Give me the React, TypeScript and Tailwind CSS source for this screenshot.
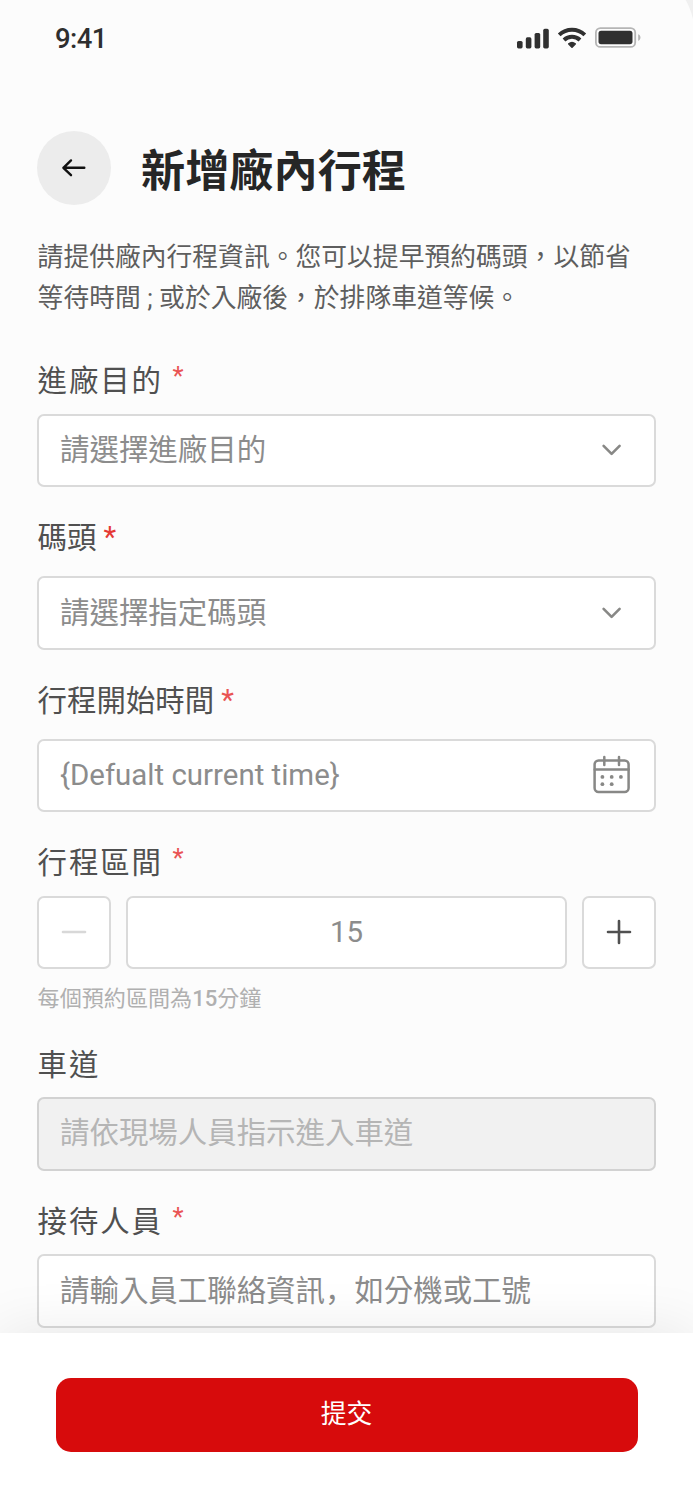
import type { ReactNode } from "react";

function Chevron() {
  return (
    <svg className="h-11 w-11 shrink-0" viewBox="0 0 44 44" fill="none" stroke="#888886" strokeWidth="2.6" strokeLinecap="round" strokeLinejoin="round">
      <path d="M13.6 17.9 21.6 25.9 29.6 17.9" />
    </svg>
  );
}

function CalendarIcon() {
  return (
    <svg className="h-11 w-11 shrink-0" viewBox="0 0 44 44" fill="none" stroke="#888886" strokeWidth="2.5" strokeLinecap="round">
      <rect x="4.6" y="7.5" width="34" height="31.5" rx="4" />
      <path d="M4.7 16.5h34M14.3 3.9v8M29 3.9v8" />
      <g fill="#888886" stroke="none">
        <circle cx="12.4" cy="23.9" r="1.9" />
        <circle cx="21.7" cy="23.9" r="1.9" />
        <circle cx="30.9" cy="23.9" r="1.9" />
        <circle cx="12.4" cy="31.2" r="1.9" />
        <circle cx="21.7" cy="31.2" r="1.9" />
      </g>
    </svg>
  );
}

function Label({ children, spaced, mark }: { children: ReactNode; spaced?: boolean; mark?: ReactNode }) {
  return (
    <div className="flex h-11 items-start pl-[0.6px] text-[29.44px] leading-[44px] text-[#505050]">
      <span className={spaced ? "tracking-[1.9px]" : ""}>{children}</span>
      {mark}
    </div>
  );
}

const smallMark = <span className="ml-[9.5px] text-[25.7px] leading-[32px] text-[#e95454]">*</span>;

function Box({ children, className = "" }: { children: ReactNode; className?: string }) {
  return (
    <div className={"flex h-[73.6px] items-center rounded-[7px] border-2 pb-px " + className}>
      {children}
    </div>
  );
}

const inputBox = "justify-between border-[#dadada] bg-white pl-[21px] pr-5 text-[29.44px] text-[#8c8c8c]";

function StatusBar() {
  return (
    <div className="flex h-[76px] items-center justify-between pl-[55px] pr-[52px]">
      <span className="pt-0.5 text-[27.5px] font-medium leading-8 tracking-[-0.6px] text-[#2e2e2e]">9:41</span>
      <svg className="h-8 w-[126px]" viewBox="0 0 126 32" fill="none">
        <g fill="#303030">
          <rect x="2" y="19" width="5.6" height="7.4" rx="1.6" />
          <rect x="10.8" y="15.3" width="5.6" height="11.1" rx="1.6" />
          <rect x="19.6" y="11" width="5.6" height="15.4" rx="1.6" />
          <rect x="28.2" y="6.8" width="5.6" height="19.6" rx="1.6" />
          <path d="M53.8 21.9a5 5 0 0 1 6.4 0l-3.2 3.3z" stroke="#303030" strokeWidth="1.6" strokeLinejoin="round" />
        </g>
        <path d="M44.2 12.9a18.5 18.5 0 0 1 25.6 0M49 18a11.8 11.8 0 0 1 16 0" stroke="#303030" strokeWidth="4" />
        <rect x="80.9" y="6.1" width="39.3" height="18.8" rx="4.5" stroke="#b5b5b5" strokeWidth="1.8" />
        <rect x="83.5" y="8.8" width="34" height="13.4" rx="2.6" fill="#303030" />
        <path d="M123.2 12.2c3 1.1 3 5.7 0 6.8z" fill="#b5b5b5" />
      </svg>
    </div>
  );
}

export default function App() {
  return (
    <div className="h-[1500px] w-[693px] overflow-hidden bg-[#f0f0f0] font-['Roboto','Noto_Sans_CJK_TC',sans-serif]">
      <div className="-mt-[38px] h-[1371px] w-[695px] overflow-hidden rounded-tr-[74px] bg-[#fcfcfc] pt-[38px]">
        <div className="w-[693px]">
          <StatusBar />
          <main className="px-[37px]">
            <header className="mt-[55px] flex h-[74px] items-center">
              <button className="flex size-[74px] items-center justify-center rounded-full bg-[#ececec]" aria-label="返回">
                <svg className="size-11" viewBox="0 0 44 44" fill="none" stroke="#111111" strokeWidth="2.4" strokeLinecap="round" strokeLinejoin="round">
                  <path d="M32.3 21.8H11.5M19 14.4l-7.6 7.4 7.6 7.4" />
                </svg>
              </button>
              <h1 className="ml-[30px] pt-2 text-[44.16px] font-bold leading-[60px] text-[#262626]">新增廠內行程</h1>
            </header>
            <p className="mt-[32px] whitespace-nowrap pl-[0.6px] text-[25.76px] leading-[40.5px] tracking-[0.04px] text-[#5e5e5e]">
              請提供廠內行程資訊。您可以提早預約碼頭，以節省
              <br />
              等待時間 ; 或於入廠後，於排隊車道等候。
            </p>
            <section className="mt-[41px] flex flex-col gap-[10.6px]">
              <Label spaced mark={smallMark}>進廠目的</Label>
              <Box className={inputBox}>請選擇進廠目的<Chevron /></Box>
            </section>
            <section className="mt-[29.1px] flex flex-col gap-4">
              <Label mark={<span className="ml-[7px] leading-[42px] text-[#e53935]">*</span>}>碼頭</Label>
              <Box className={inputBox}>請選擇指定碼頭<Chevron /></Box>
            </section>
            <section className="mt-[28.8px] flex flex-col gap-4">
              <Label mark={<span className="ml-[7px] leading-[42px] text-[#e95454]">*</span>}>行程開始時間</Label>
              <Box className={inputBox}>{"{Defualt current time}"}<CalendarIcon /></Box>
            </section>
            <section className="mt-[29px] flex flex-col gap-[10.6px]">
              <Label spaced mark={smallMark}>行程區間</Label>
              <div className="flex gap-[15px]">
                <Box className="w-[74px] justify-center border-[#dadada] bg-white">
                  <svg className="size-8" viewBox="0 0 32 32" stroke="#d8d8d8" strokeWidth="2.6" strokeLinecap="round"><path d="M5 16h22" /></svg>
                </Box>
                <Box className="flex-1 justify-center border-[#dadada] bg-white text-[29.44px] text-[#8c8c8c]">15</Box>
                <Box className="w-[74px] justify-center border-[#dadada] bg-white">
                  <svg className="size-8" viewBox="0 0 32 32" stroke="#505050" strokeWidth="2.6" strokeLinecap="round"><path d="M5 16h22M16 5v22" /></svg>
                </Box>
              </div>
              <p className="mt-px pl-[0.6px] text-[22.08px] leading-9 text-[#b0b0b0]">每個預約區間為<span className="font-medium">15</span>分鐘</p>
            </section>
            <section className="mt-[26px] flex flex-col gap-[10.2px]">
              <Label spaced>車道</Label>
              <Box className="border-[#d2d2d2] bg-[#f1f1f1] pl-[21px] text-[29.44px] text-[#b5b5b5]">請依現場人員指示進入車道</Box>
            </section>
            <section className="mt-[29.4px] flex flex-col gap-[10px]">
              <Label spaced mark={smallMark}>接待人員</Label>
              <Box className={inputBox}>
                <span className="pb-0.5 leading-10">請輸入員工聯絡資訊<span className="font-['Noto_Sans_CJK_SC']">，</span>如分機或工號</span>
              </Box>
            </section>
          </main>
        </div>
      </div>
      <footer className="relative h-[167px] bg-white px-[55.5px] pt-[45px] shadow-[0_0_55px_rgba(0,0,0,0.09)]">
        <button className="flex h-[73.6px] w-full items-center justify-center rounded-[15px] bg-[#d70b0c] text-[25.76px] text-white">提交</button>
      </footer>
    </div>
  );
}
